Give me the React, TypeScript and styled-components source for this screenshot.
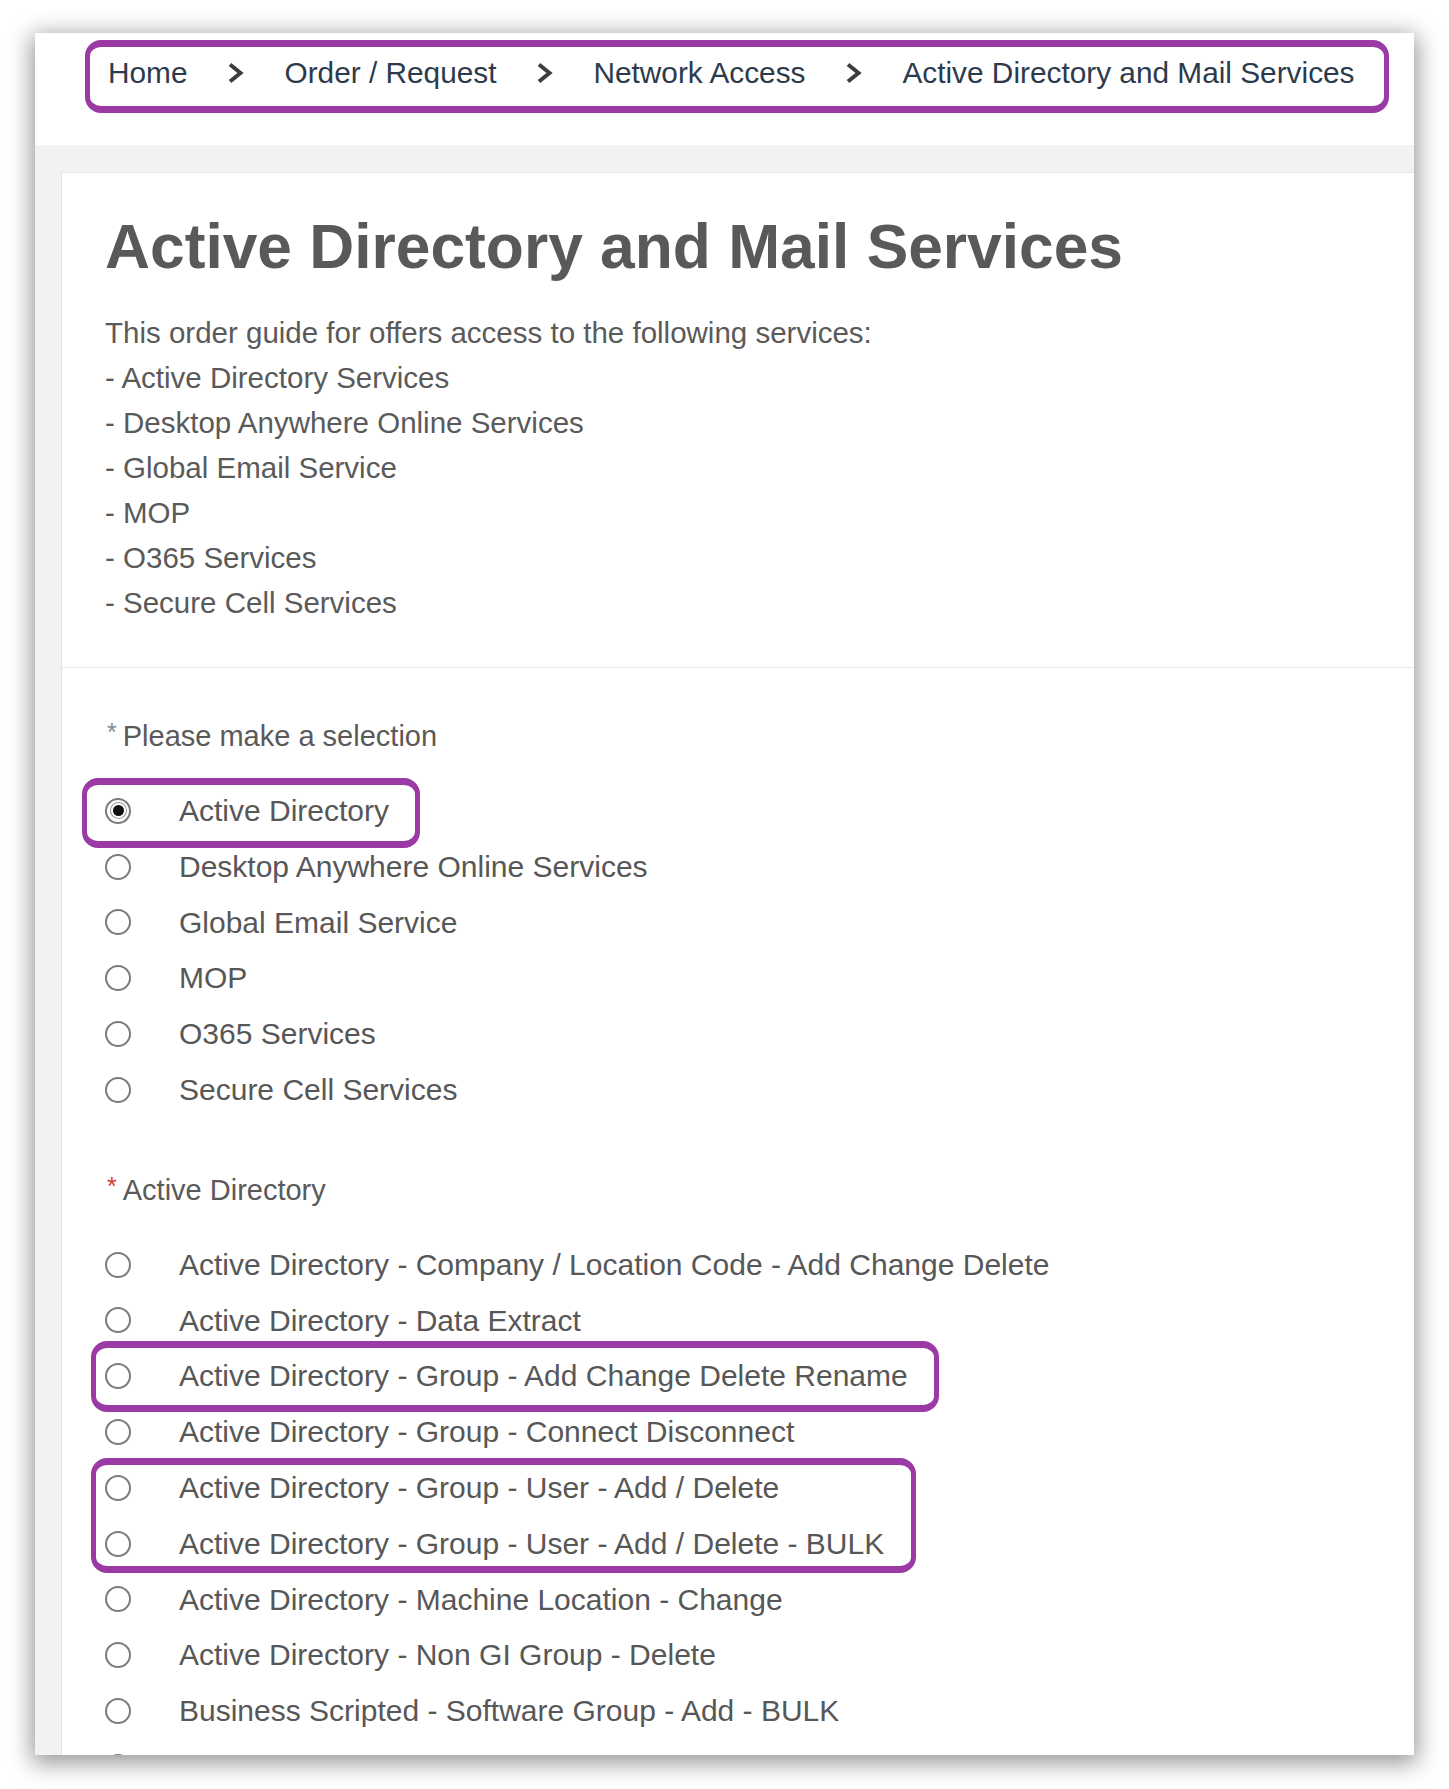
import React from 'react';
import styled, { createGlobalStyle } from 'styled-components';

const GlobalStyle = createGlobalStyle`
  html, body { margin: 0; padding: 0; background: #ffffff; }
  body { font-family: "Liberation Sans", Arial, Helvetica, sans-serif; }
  * { box-sizing: border-box; }
`;

const Page = styled.div`
  width: 1449px;
  height: 1789px;
  padding: 33px 35px 34px 35px;
  background: #ffffff;
`;

const Frame = styled.div`
  height: 100%;
  display: flex;
  flex-direction: column;
  background: #f1f2f3;
  box-shadow: 0 5px 22px 3px rgba(0, 0, 0, 0.42);
  overflow: hidden;
`;

const Header = styled.header`
  flex: none;
  height: 112px;
  padding: 20px 0 0 73px;
  background: #ffffff;
`;

const Breadcrumb = styled.nav`
  position: relative;
  display: inline-flex;
  align-items: center;
  gap: 40px;
  font-size: 29.8px;
  line-height: 40px;
  color: #2d3a4c;
  white-space: nowrap;
`;

const Crumb = styled.span`
  display: block;
`;

const Highlight = styled.div<{ $t: number; $r: number; $b: number; $l: number }>`
  position: absolute;
  top: ${(p) => p.$t}px;
  right: ${(p) => p.$r}px;
  bottom: ${(p) => p.$b}px;
  left: ${(p) => p.$l}px;
  border-style: solid;
  border-color: #9b3aa5;
  border-width: 7px 5px 7px 5px;
  border-radius: 16px;
  pointer-events: none;
`;

const Content = styled.main`
  flex: 1;
  padding: 27px 0 0 26px;
`;

const Card = styled.section`
  min-height: 100%;
  background: #ffffff;
  border-top: 1px solid #e4e5e6;
  border-left: 1px solid #e4e5e6;
`;

const Intro = styled.div`
  padding: 38px 0 42px 43px;
`;

const Title = styled.h1`
  margin: 0;
  font-size: 62.3px;
  font-weight: 700;
  line-height: 72px;
  color: #58595b;
`;

const Description = styled.div`
  margin-top: 27px;
  font-size: 29.5px;
  line-height: 45px;
  color: #5a5a5a;
`;

const Form = styled.div`
  border-top: 1px solid #e6e6e6;
  padding: 48px 0 0 43px;
`;

const FieldLabel = styled.div<{ $gap: number }>`
  margin-top: ${(p) => p.$gap}px;
  font-size: 29px;
  line-height: 40px;
  color: #5a5a5a;
`;

const Asterisk = styled.span<{ $required?: boolean }>`
  display: inline-block;
  margin: 0 6px 0 2px;
  font-size: 25px;
  line-height: 1;
  vertical-align: 5px;
  color: ${(p) => (p.$required ? '#d63b30' : '#8a8a8a')};
`;

const RadioList = styled.div`
  margin-top: 27px;
  display: flex;
  flex-direction: column;
`;

const Group = styled.div`
  position: relative;
  width: fit-content;
`;

const Row = styled.div`
  position: relative;
  display: flex;
  align-items: center;
  width: fit-content;
  height: 55.8px;
`;

const Radio = styled.span<{ $checked?: boolean }>`
  flex: none;
  width: 26px;
  height: 26px;
  border-radius: 50%;
  border: 2px solid #7c7c7c;
  background: #ffffff;
  display: grid;
  place-items: center;
  &::after {
    content: '';
    display: ${(p) => (p.$checked ? 'block' : 'none')};
    width: 11px;
    height: 11px;
    border-radius: 50%;
    background: #111111;
    box-shadow: 0 0 0 2px #ffffff, 0 0 0 3px #9a9a9a;
  }
`;

const Label = styled.span`
  margin-left: 48px;
  font-size: 30px;
  line-height: 55.8px;
  color: #575757;
  white-space: nowrap;
`;

const Chevron = () => (
  <svg width="17" height="22" viewBox="0 0 17 22" aria-hidden="true">
    <polyline
      points="3,2.5 13.5,11 3,19.5"
      fill="none"
      stroke="#3d3d3d"
      strokeWidth="4"
      strokeLinejoin="miter"
      strokeLinecap="butt"
    />
  </svg>
);

const crumbs = ['Home', 'Order / Request', 'Network Access', 'Active Directory and Mail Services'];

const services = [
  'Active Directory Services',
  'Desktop Anywhere Online Services',
  'Global Email Service',
  'MOP',
  'O365 Services',
  'Secure Cell Services',
];

const selections = [
  'Active Directory',
  'Desktop Anywhere Online Services',
  'Global Email Service',
  'MOP',
  'O365 Services',
  'Secure Cell Services',
];

const adOptions = [
  'Active Directory - Company / Location Code - Add Change Delete',
  'Active Directory - Data Extract',
  'Active Directory - Group - Add Change Delete Rename',
  'Active Directory - Group - Connect Disconnect',
  'Active Directory - Group - User - Add / Delete',
  'Active Directory - Group - User - Add / Delete - BULK',
  'Active Directory - Machine Location - Change',
  'Active Directory - Non GI Group - Delete',
  'Business Scripted - Software Group - Add - BULK',
  'Business Scripted - Software Group - Add / Delete - Uninstall',
];

const Option = ({ text, checked }: { text: string; checked?: boolean }) => (
  <Row>
    <Radio $checked={checked} />
    <Label>{text}</Label>
  </Row>
);

export default function App() {
  return (
    <>
      <GlobalStyle />
      <Page>
        <Frame>
          <Header>
            <Breadcrumb>
              {crumbs.map((c, i) => (
                <React.Fragment key={c}>
                  {i > 0 && <Chevron />}
                  <Crumb>{c}</Crumb>
                </React.Fragment>
              ))}
              <Highlight $t={-13} $r={-34} $b={-20} $l={-23} />
            </Breadcrumb>
          </Header>
          <Content>
            <Card>
              <Intro>
                <Title>Active Directory and Mail Services</Title>
                <Description>
                  <div>This order guide for offers access to the following services:</div>
                  {services.map((s) => (
                    <div key={s}>- {s}</div>
                  ))}
                </Description>
              </Intro>
              <Form>
                <FieldLabel $gap={0}>
                  <Asterisk>*</Asterisk>Please make a selection
                </FieldLabel>
                <RadioList>
                  {selections.map((s, i) =>
                    i === 0 ? (
                      <Row key={s}>
                        <Radio $checked />
                        <Label>{s}</Label>
                        <Highlight $t={-5} $r={-31} $b={-9} $l={-23} />
                      </Row>
                    ) : (
                      <Option key={s} text={s} />
                    )
                  )}
                </RadioList>
                <FieldLabel $gap={52}>
                  <Asterisk $required>*</Asterisk>Active Directory
                </FieldLabel>
                <RadioList>
                  {adOptions.slice(0, 2).map((s) => (
                    <Option key={s} text={s} />
                  ))}
                  <Row>
                    <Radio />
                    <Label>{adOptions[2]}</Label>
                    <Highlight $t={-7} $r={-31} $b={-8} $l={-14} />
                  </Row>
                  <Option text={adOptions[3]} />
                  <Group>
                    <Option text={adOptions[4]} />
                    <Option text={adOptions[5]} />
                    <Highlight $t={-2} $r={-32} $b={-1} $l={-14} />
                  </Group>
                  {adOptions.slice(6).map((s) => (
                    <Option key={s} text={s} />
                  ))}
                </RadioList>
              </Form>
            </Card>
          </Content>
        </Frame>
      </Page>
    </>
  );
}
